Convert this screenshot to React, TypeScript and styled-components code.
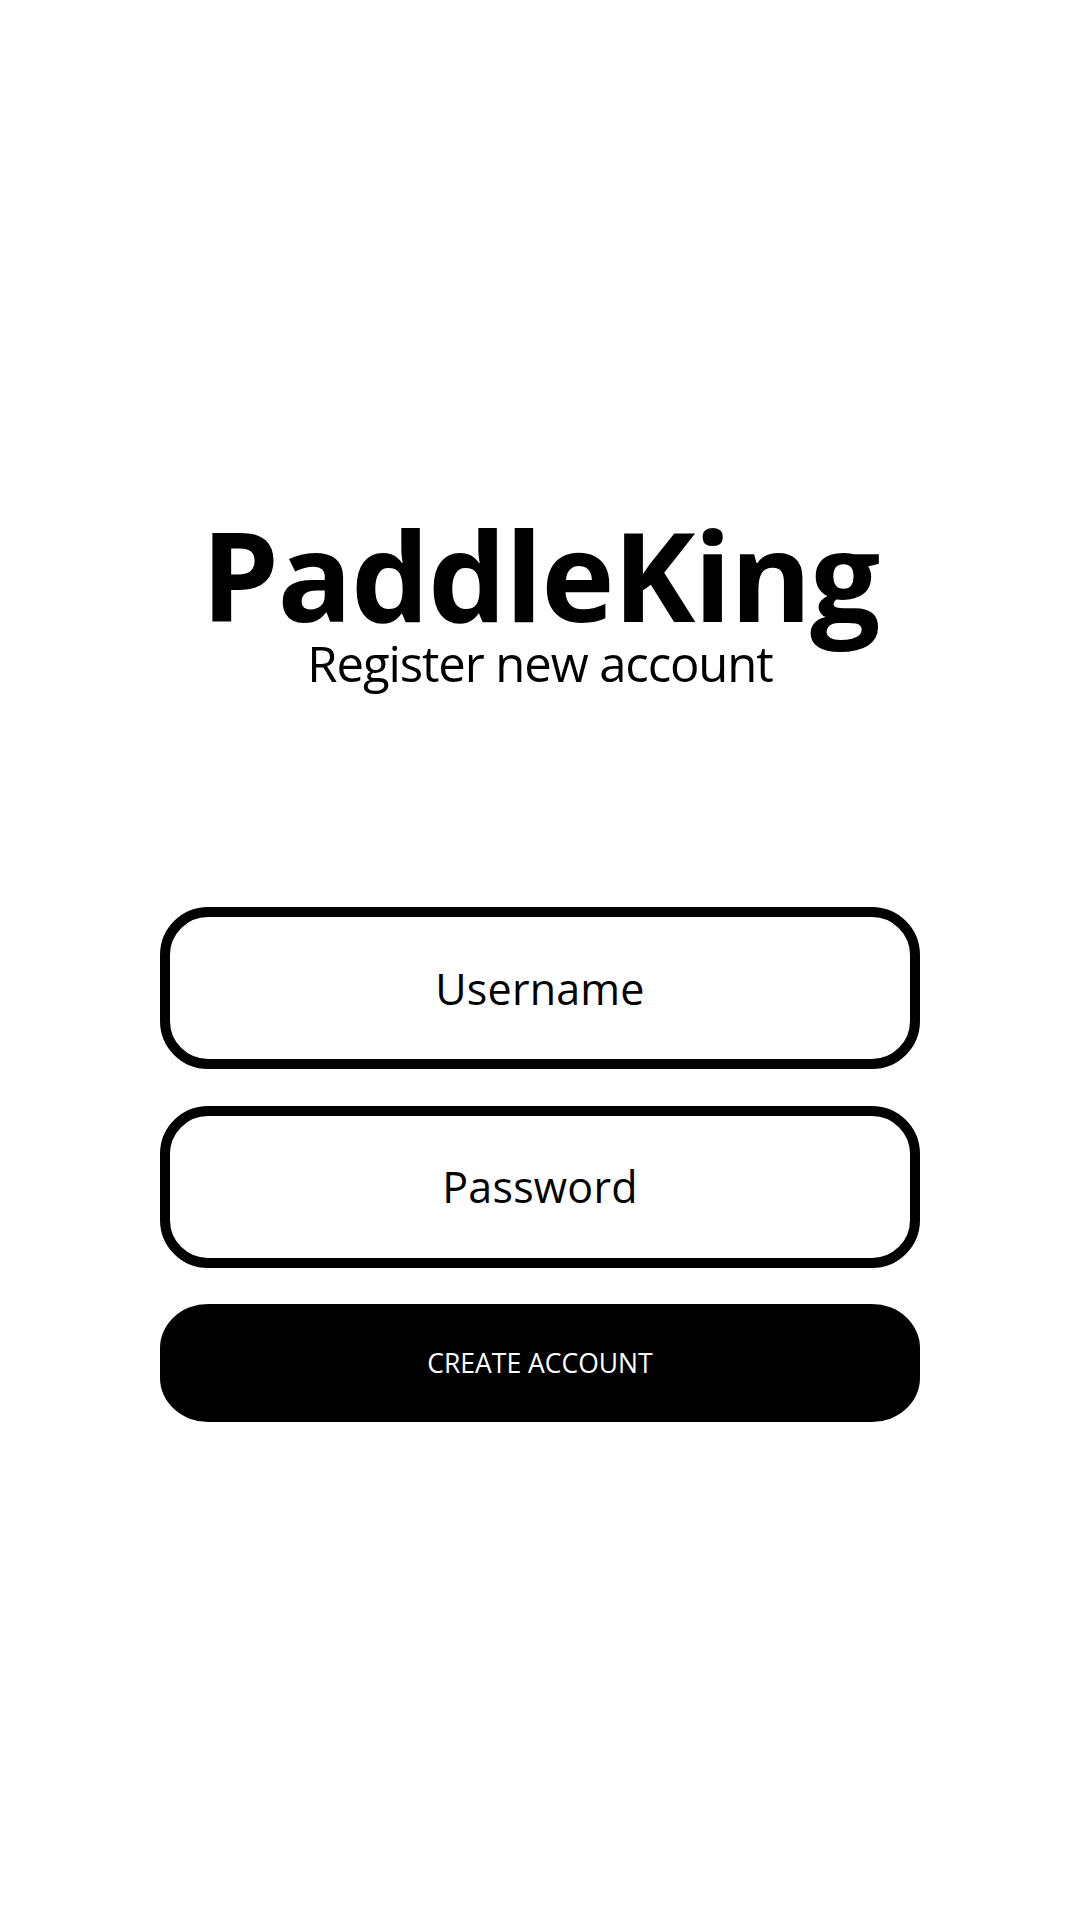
import React from "react";
import styled, { createGlobalStyle } from "styled-components";

const Global = createGlobalStyle`
  html, body { margin: 0; padding: 0; background: #ffffff; }
  body { font-family: "Open Sans", "Liberation Sans", Arial, sans-serif; color: #000; }
`;

const Page = styled.div`
  min-height: 1920px;
  display: flex;
  flex-direction: column;
  align-items: center;
  padding-top: 512px;
  box-sizing: border-box;
`;

const Title = styled.h1`
  margin: 0;
  font-family: "Open Sans", "Liberation Sans", Arial, sans-serif;
  font-weight: 700;
  font-size: 124px;
  line-height: 1;
  letter-spacing: -1.5px;
`;

const Subtitle = styled.p`
  margin: 3px 0 0;
  font-family: "Open Sans", "Liberation Sans", Arial, sans-serif;
  font-weight: 400;
  font-size: 49px;
  line-height: 1;
  letter-spacing: -1.1px;
`;

const Form = styled.form`
  margin-top: 219px;
  width: 760px;
  display: flex;
  flex-direction: column;
  gap: 36.5px;
`;

const Field = styled.div`
  height: 162px;
  box-sizing: border-box;
  border: 10px solid #000;
  border-radius: 48px;
  display: flex;
  align-items: center;
  justify-content: center;
  font-family: "Open Sans", "Liberation Sans", Arial, sans-serif;
  font-size: 43px;
  line-height: 1;
  letter-spacing: 0.2px;
  color: #000;
`;

const Button = styled.button`
  height: 118px;
  border: none;
  border-radius: 48px / 44px;
  background: #000;
  color: #fff;
  font-family: "Open Sans", "Liberation Sans", Arial, sans-serif;
  font-size: 26.5px;
  line-height: 1;
  display: flex;
  align-items: center;
  justify-content: center;
  cursor: pointer;
`;

export default function App() {
  return (
    <>
      <Global />
      <Page>
        <Title>PaddleKing</Title>
        <Subtitle>Register new account</Subtitle>
        <Form onSubmit={(e) => e.preventDefault()}>
          <Field>Username</Field>
          <Field>Password</Field>
          <Button type="submit">CREATE ACCOUNT</Button>
        </Form>
      </Page>
    </>
  );
}
